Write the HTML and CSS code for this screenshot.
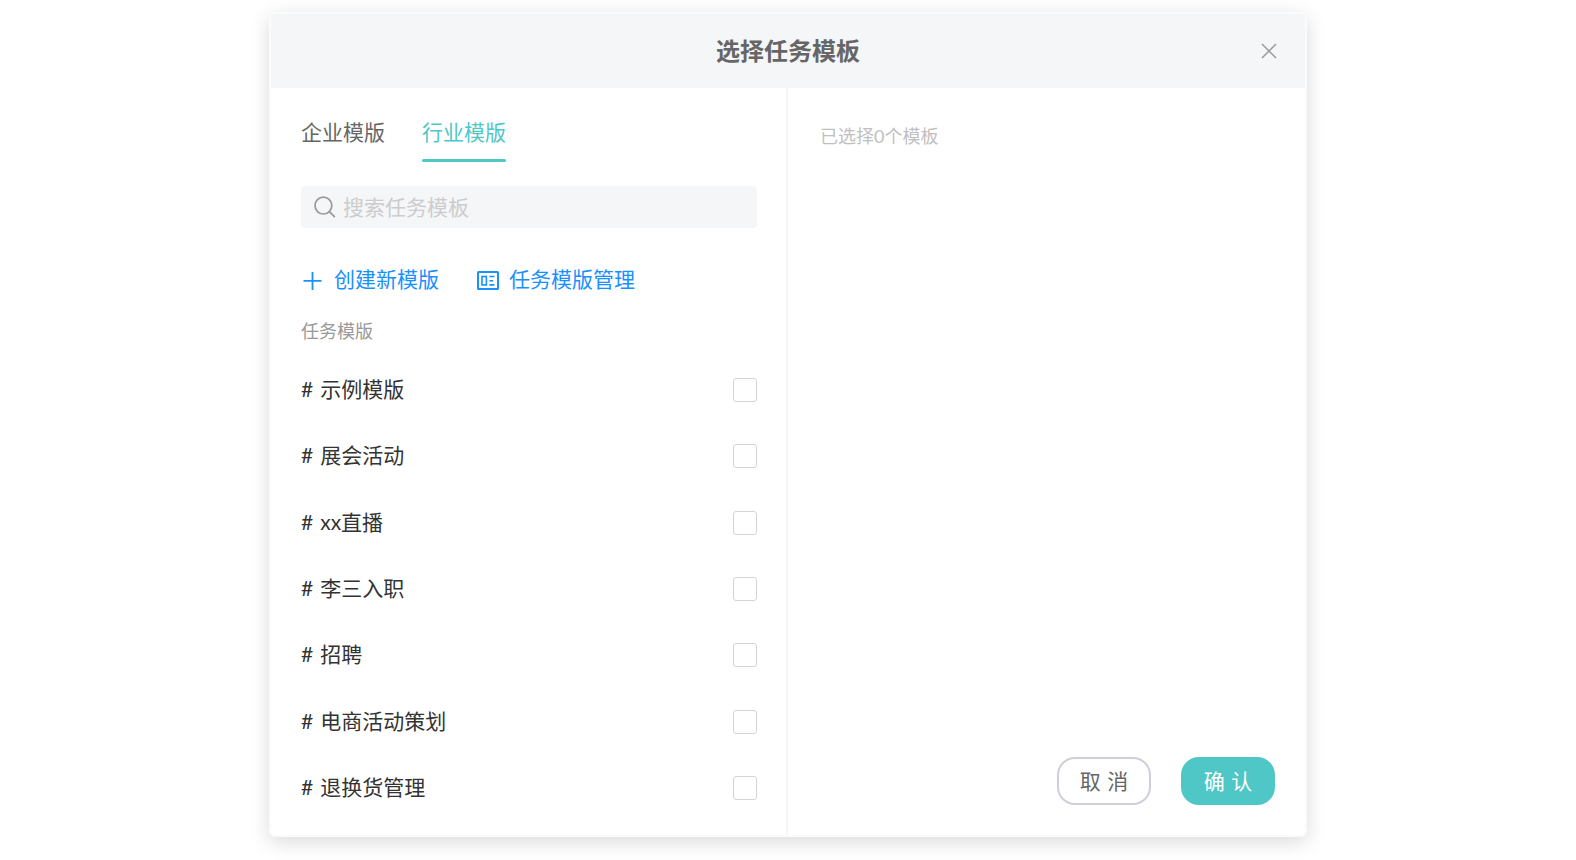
FILE: index.html
```
<!DOCTYPE html>
<html lang="zh-CN">
<head>
<meta charset="utf-8">
<meta name="viewport" content="width=device-width, initial-scale=1">
<title>选择任务模板</title>
<link rel="stylesheet" href="styles.css">
</head>
<body>
  <form class="dialog" role="dialog" aria-labelledby="dialog-title">
    <header class="dialog-header">
      <h1 id="dialog-title">选择任务模板</h1>
      <button type="button" class="close" aria-label="关闭">
        <svg width="16" height="16" viewBox="0 0 16 16" fill="none" stroke="currentColor" stroke-width="1.5"><path d="M1 1l14 14M15 1L1 15"/></svg>
      </button>
    </header>
    <div class="dialog-body">
      <section class="picker">
        <nav class="tabs">
          <a href="#company">企业模版</a>
          <a href="#industry" class="active">行业模版</a>
        </nav>
        <label class="search">
          <svg width="22" height="22" viewBox="0 0 22 22" fill="none" stroke="currentColor" stroke-width="1.7" stroke-linecap="round"><circle cx="9.4" cy="9.6" r="8.4"/><path d="M15.4 15.6l5 5"/></svg>
          <input type="text" placeholder="搜索任务模板" aria-label="搜索任务模板">
        </label>
        <div class="actions">
          <a href="#create">
            <svg width="24" height="24" viewBox="0 0 24 24" fill="none" stroke="currentColor" stroke-width="1.8"><path d="M2.5 13.9h18M11.5 4.9v18"/></svg>
            <span>创建新模版</span>
          </a>
          <a href="#manage">
            <svg width="24" height="24" viewBox="0 0 24 24" fill="none" stroke="currentColor" stroke-width="2"><rect x="2" y="5" width="20" height="17" rx=".6"/><rect x="6" y="9.5" width="4.4" height="8.4" stroke-width="1.6"/><path d="M13.4 9.5h5M13.4 13.7h3.8M13.4 17.9h5" stroke-width="1.6"/></svg>
            <span>任务模版管理</span>
          </a>
        </div>
        <h2>任务模版</h2>
        <ul class="templates">
          <li><label for="t1"><span>#</span><span>示例模版</span></label><input type="checkbox" id="t1"></li>
          <li><label for="t2"><span>#</span><span>展会活动</span></label><input type="checkbox" id="t2"></li>
          <li><label for="t3"><span>#</span><span>xx直播</span></label><input type="checkbox" id="t3"></li>
          <li><label for="t4"><span>#</span><span>李三入职</span></label><input type="checkbox" id="t4"></li>
          <li><label for="t5"><span>#</span><span>招聘</span></label><input type="checkbox" id="t5"></li>
          <li><label for="t6"><span>#</span><span>电商活动策划</span></label><input type="checkbox" id="t6"></li>
          <li><label for="t7"><span>#</span><span>退换货管理</span></label><input type="checkbox" id="t7"></li>
        </ul>
      </section>
      <section class="selected">
        <p>已选择0个模板</p>
        <footer class="buttons">
          <button type="button" class="btn">取 消</button>
          <button type="submit" class="btn btn-primary">确 认</button>
        </footer>
      </section>
    </div>
  </form>
</body>
</html>
```
FILE: styles.css
```
* {
    box-sizing: border-box;
}
body {
    margin: 0;
    padding: 12px 16px 23px;
    min-height: 100vh;
    display: flex;
    justify-content: center;
    background: #fff;
    color: #333;
    font-family: Lato, "Noto Sans CJK SC", sans-serif;
    font-size: 21px;
}
h1, h2, p, ul {
    margin: 0;
    padding: 0;
    font-weight: 400;
}
a {
    text-decoration: none;
}
svg {
    display: block;
    flex: none;
}

.dialog {
    width: 100%;
    max-width: 1038px;
    display: flex;
    flex-direction: column;
    border: 2px solid #fafbfc;
    border-radius: 6px;
    background: #fff;
    box-shadow: 0 5px 20px rgba(0, 0, 0, .15);
}
.dialog-header {
    display: grid;
    grid-template-columns: 1fr auto 1fr;
    align-items: center;
    height: 74px;
    padding: 0 28px;
    background: #f4f6f8;
}
.dialog-header h1 {
    grid-column: 2;
    color: #666;
    font-size: 24px;
    font-weight: 700;
    line-height: 36px;
}
.close {
    justify-self: end;
    padding: 0;
    border: 0;
    background: none;
    color: #999;
    cursor: pointer;
}
.dialog-body {
    flex: 1;
    display: grid;
    grid-template-columns: 1fr 1fr;
}

.picker {
    display: flex;
    flex-direction: column;
    padding: 30px 29px 14px 30px;
    border-right: 2px solid #f4f5f6;
}
.tabs {
    display: flex;
    gap: 37px;
}
.tabs a {
    padding-bottom: 13px;
    border-bottom: 3px solid transparent;
    color: #666;
    line-height: 28px;
}
.tabs .active {
    position: relative;
    color: #4fc7c6;
}
.tabs .active::after {
    content: "";
    position: absolute;
    left: 0;
    right: 0;
    bottom: -3px;
    height: 3px;
    border-radius: 2px;
    background: #4fc7c6;
}
.search {
    display: flex;
    align-items: center;
    gap: 7px;
    height: 42px;
    margin-top: 24px;
    padding: 0 13px;
    border-radius: 4px;
    background: #f4f6f8;
    color: #999;
}
.search input {
    flex: 1;
    min-width: 0;
    padding: 0 0 2px;
    border: 0;
    outline: 0;
    background: none;
    color: #333;
    font: inherit;
}
.search input::placeholder {
    color: #ccc;
}
.actions {
    display: flex;
    gap: 37px;
    margin-top: 35px;
}
.actions a {
    display: flex;
    align-items: center;
    gap: 9px;
    color: #1890ff;
    line-height: 32px;
}
.picker h2 {
    margin: 23px 0 13px;
    color: #999;
    font-size: 18px;
    line-height: 26px;
}
.templates {
    flex: 1;
    display: flex;
    flex-direction: column;
    list-style: none;
}
.templates li {
    flex: 1;
    display: flex;
    align-items: center;
    justify-content: space-between;
    min-height: 48px;
}
.templates label {
    flex: 1;
    display: flex;
    gap: 7px;
    padding-bottom: 2px;
    line-height: 30px;
}
.templates input {
    appearance: none;
    width: 24px;
    height: 24px;
    margin: 0;
    border: 1px solid #d4d4d4;
    border-radius: 3px;
    background: #fff;
}
.templates input:checked {
    border-color: #4fc7c6;
    background: #4fc7c6;
}

.selected {
    display: flex;
    flex-direction: column;
    justify-content: space-between;
    padding: 35px 30px 30px 32px;
}
.selected p {
    color: #bfbfbf;
    font-size: 18px;
    line-height: 26px;
}
.buttons {
    display: flex;
    justify-content: flex-end;
    gap: 30px;
}
.btn {
    width: 94px;
    height: 48px;
    padding: 0 0 2px;
    border: 2px solid #cfcfda;
    border-radius: 18px;
    background: #fff;
    color: #666;
    font-family: "DejaVu Sans", "Noto Sans CJK SC", sans-serif;
    font-size: 21px;
    cursor: pointer;
}
.btn-primary {
    border-color: #4fc7c6;
    background: #4fc7c6;
    color: #fff;
}
```
